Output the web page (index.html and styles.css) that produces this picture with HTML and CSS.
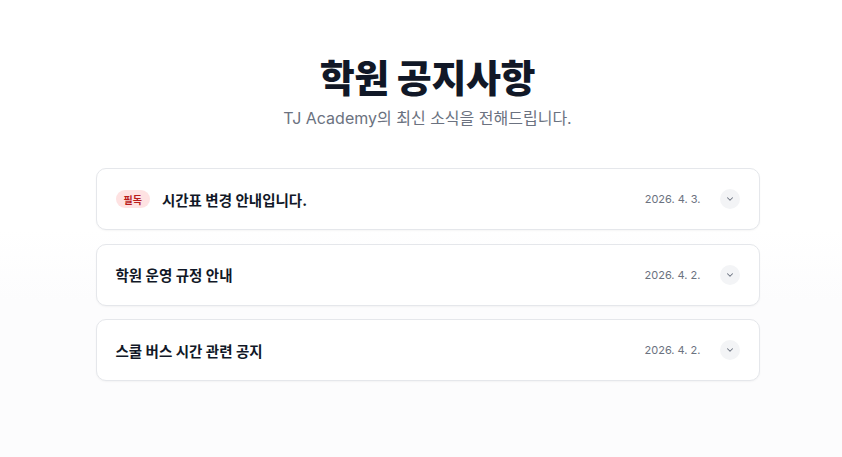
FILE: index.html
```html
<!DOCTYPE html>
<html lang="ko">
<head>
<meta charset="utf-8">
<link rel="stylesheet" href="styles.css">
</head>
<body>
<main class="page">
  <header class="hero">
    <h1 class="title">학원 공지사항</h1>
    <p class="subtitle">TJ Academy의 최신 소식을 전해드립니다.</p>
  </header>
  <section class="list">
    <div class="card">
      <div class="left">
        <span class="badge">필독</span>
        <span class="name">시간표 변경 안내입니다.</span>
      </div>
      <div class="right">
        <span class="date">2026. 4. 3.</span>
        <span class="chev"><svg width="10" height="10" viewBox="0 0 24 24" fill="none" stroke="#6b7280" stroke-width="2.5" stroke-linecap="round" stroke-linejoin="round"><path d="M6 9l6 6 6-6"/></svg></span>
      </div>
    </div>
    <div class="card">
      <div class="left">
        <span class="name">학원 운영 규정 안내</span>
      </div>
      <div class="right">
        <span class="date">2026. 4. 2.</span>
        <span class="chev"><svg width="10" height="10" viewBox="0 0 24 24" fill="none" stroke="#6b7280" stroke-width="2.5" stroke-linecap="round" stroke-linejoin="round"><path d="M6 9l6 6 6-6"/></svg></span>
      </div>
    </div>
    <div class="card">
      <div class="left">
        <span class="name">스쿨 버스 시간 관련 공지</span>
      </div>
      <div class="right">
        <span class="date">2026. 4. 2.</span>
        <span class="chev"><svg width="10" height="10" viewBox="0 0 24 24" fill="none" stroke="#6b7280" stroke-width="2.5" stroke-linecap="round" stroke-linejoin="round"><path d="M6 9l6 6 6-6"/></svg></span>
      </div>
    </div>
  </section>
</main>
</body>
</html>
```
FILE: styles.css
```css
html, body {
  margin: 0;
  padding: 0;
}
body {
  min-height: 457px;
  padding-left: 13px;
  box-sizing: border-box;
  background: linear-gradient(to bottom, #ffffff 0px, #ffffff 230px, #fcfcfd 300px, #fcfcfd 100%);
  font-family: Inter, "Noto Sans CJK KR", sans-serif;
  color: #111827;
}
.page {
  width: 664px;
  margin: 0 auto;
  padding-top: 51px;
}
.hero {
  text-align: center;
  margin-bottom: 38px;
}
.title {
  margin: 0;
  font-size: 38px;
  line-height: 54px;
  font-weight: 800;
  letter-spacing: -0.01em;
  color: #111827;
}
.subtitle {
  margin: 1px 0 0;
  font-size: 16px;
  line-height: 24px;
  color: #6b7280;
}
.list {
  display: flex;
  flex-direction: column;
  gap: 13.5px;
}
.card {
  height: 62px;
  box-sizing: border-box;
  display: flex;
  align-items: center;
  justify-content: space-between;
  padding: 0 19px 0 19px;
  background: #fff;
  border: 1px solid #e5e7eb;
  border-radius: 10px;
  box-shadow: 0 1px 2px rgba(0,0,0,0.04);
}
.left {
  display: flex;
  align-items: center;
  gap: 12px;
}
.badge {
  display: inline-flex;
  align-items: center;
  justify-content: center;
  height: 18px;
  padding: 0 8px;
  border-radius: 9px;
  background: #fee2e2;
  color: #b91c1c;
  font-size: 10px;
  font-weight: 700;
}
.name {
  font-size: 14.5px;
  font-weight: 700;
  color: #111827;
}
.right {
  display: flex;
  align-items: center;
  gap: 19px;
}
.date {
  font-size: 11px;
  color: #6b7280;
}
.chev {
  width: 20px;
  height: 20px;
  border-radius: 50%;
  background: #f3f4f6;
  display: flex;
  align-items: center;
  justify-content: center;
}
```
